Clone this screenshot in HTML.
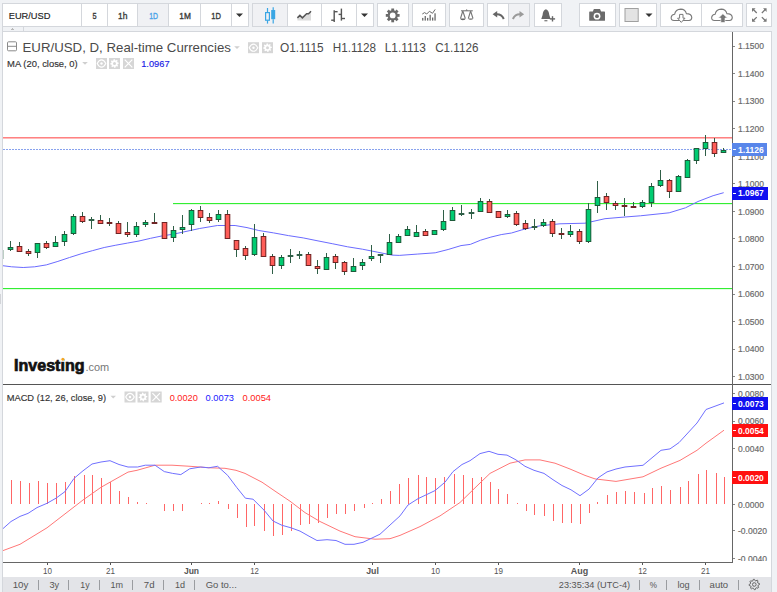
<!DOCTYPE html>
<html><head><meta charset="utf-8">
<style>
html,body{margin:0;padding:0;}
body{width:777px;height:592px;overflow:hidden;background:#f0f2f5;position:relative;font-family:"Liberation Sans",sans-serif;}
.g{position:absolute;top:3px;height:22px;background:#fff;border:1px solid #d4d7dc;}
.b{position:absolute;top:0;height:22px;border-left:1px solid #d4d7dc;text-align:center;font-size:9.4px;font-weight:normal;-webkit-text-stroke:0.35px #3a3a3a;color:#3a3a3a;line-height:23px;}
.b.first{border-left:none}
.act{background:#f0f1f4}
.ab{position:absolute;}
#frame{position:absolute;left:2px;top:31px;width:768px;height:561px;border:1px solid #d4d7dc;border-bottom:none;background:#fff;}
.lg{position:absolute;white-space:nowrap;}
#bbar{position:absolute;left:3px;top:577px;width:768px;height:15px;background:#e3e4e8;}
#bbar span{position:absolute;top:0;line-height:15px;font-size:10px;color:#555;}
.sep{position:absolute;top:3px;width:1px;height:11px;background:#a9abb0;}
svg{position:absolute;left:0;top:0;}
</style></head><body>
<!-- toolbar group A -->
<div class="g" style="left:2px;width:245px;">
  <div class="b first" style="left:0;width:78px;text-align:left;font-weight:normal;color:#1a1a1a;font-size:9.6px;letter-spacing:-0.1px;-webkit-text-stroke:0.25px #1a1a1a;"></div>
  <div class="b" style="left:78px;width:25px;"></div>
  <div class="b" style="left:104px;width:29px;"></div>
  <div class="b act" style="left:134px;width:30px;color:#4aa3e8;-webkit-text-stroke:0.35px #4aa3e8;"></div>
  <div class="b" style="left:165px;width:31px;"></div>
  <div class="b" style="left:197px;width:30px;"></div>
  <div class="b" style="left:228px;width:17px;"></div>
</div>
<div class="g" style="left:252px;width:120px;">
  <div class="b first act" style="left:0;width:34px;"></div>
  <div class="b" style="left:34px;width:33px;"></div>
  <div class="b" style="left:68px;width:34px;"></div>
  <div class="b" style="left:103px;width:17px;"></div>
</div>
<div class="g" style="left:377px;width:30px;"></div>
<div class="g" style="left:412px;width:32px;"></div>
<div class="g" style="left:449px;width:33px;"></div>
<div class="g" style="left:487px;width:41px;">
  <div class="b first" style="left:0;width:20px;"></div>
  <div class="b act" style="left:20px;width:20px;"></div>
</div>
<div class="g" style="left:534px;width:26px;"></div>
<div class="g" style="left:579px;width:35px;"></div>
<div class="g" style="left:619px;width:36px;"></div>
<div class="g" style="left:660px;width:81px;">
  <div class="b first" style="left:0;width:40px;"></div>
  <div class="b" style="left:40px;width:40px;"></div>
</div>
<div class="g" style="left:746px;width:24px;"></div>

<div id="frame"></div>
<div id="bbar"></div>

<svg width="777" height="592" viewBox="0 0 777 592">
<g shape-rendering="crispEdges">
  <rect x="3" y="27" width="768" height="4" fill="#f0f2f5"/>
  <rect x="23" y="27" width="1" height="4" fill="#d4d7dc"/><rect x="2" y="26" width="1" height="6" fill="#d4d7dc"/><rect x="0" y="294" width="1" height="10" fill="#d2d4d8"/><path d="M9.8 30.2 L15.2 30.2 L12.5 28.2 Z" fill="#b8b8b8"/>
  <rect x="3" y="384" width="768" height="1" fill="#555"/>
  <rect x="732" y="32" width="1" height="531" fill="#666"/>
  <rect x="3" y="562" width="730" height="1" fill="#666"/>
</g>
<defs><clipPath id="cp1"><rect x="3" y="32" width="729" height="352"/></clipPath><clipPath id="cp2"><rect x="3" y="385" width="729" height="177"/></clipPath><clipPath id="cp3"><rect x="733" y="385" width="38" height="176"/></clipPath></defs><g clip-path="url(#cp1)"><g shape-rendering="crispEdges">
<rect x="3" y="137" width="729" height="1" fill="#ff8282"/><rect x="3" y="138" width="729" height="1" fill="#ff8282" opacity="0.55"/>
<line x1="3" y1="149.5" x2="732" y2="149.5" stroke="#88a2ee" stroke-width="1" stroke-dasharray="2,1"/>
<rect x="173" y="203" width="559" height="1" fill="#33ee33"/><rect x="173" y="204" width="559" height="1" fill="#33ee33" opacity="0.15"/>
<rect x="3" y="288" width="729" height="1" fill="#33ee33"/><rect x="3" y="289" width="729" height="1" fill="#33ee33" opacity="0.15"/>
</g>
<polyline fill="none" stroke="#6b6bff" stroke-width="1" points="2,265.6 11.6,266.8 23.2,267.5 34.7,266.8 46.3,264.9 57.9,261.4 69.5,257.5 81.1,253.8 92.7,250.6 104.2,247.5 115.8,245.2 127.4,243.1 139,241 150.6,238.3 162.1,235.9 173.7,234.1 199.6,228.5 217.4,225.5 235.1,225.5 247,227.6 258.8,230.5 273.6,232.9 288.4,235.6 303.2,237.9 318,240.9 332.8,243.8 347.6,246.8 362.4,249.2 377.2,252.1 392,255.1 399.2,255.4 417.2,254.1 435.2,252.8 448.1,249.5 461,245.6 470.3,244.4 480.6,240.2 490.9,237.1 501.2,234.6 511.5,233 521.8,229.9 532.1,227.4 540,225.8 560,223.8 585,223.2 605,218.7 620,217.4 640.4,215.8 669.2,212.8 685.5,207.8 698,201.5 713.1,195.7 723.7,192.7"/>
<g shape-rendering="crispEdges">
<rect x="-2.3" y="250" width="5.6" height="9" fill="#1e5a3a" shape-rendering="geometricPrecision"/>
<rect x="-1.3" y="251" width="3.6" height="7" fill="#00cc71" shape-rendering="geometricPrecision"/>
<rect x="10" y="241" width="1" height="6" fill="#2f5f47"/>
<rect x="10" y="250" width="1" height="1" fill="#2f5f47"/>
<rect x="7.7" y="247" width="5.6" height="3" fill="#1e5a3a" shape-rendering="geometricPrecision"/>
<rect x="8.7" y="248" width="3.6" height="1" fill="#00cc71" shape-rendering="geometricPrecision"/>
<rect x="19" y="242" width="1" height="4" fill="#2f5f47"/>
<rect x="16.7" y="246" width="5.6" height="6" fill="#6e2424" shape-rendering="geometricPrecision"/>
<rect x="17.7" y="247" width="3.6" height="4" fill="#ff5d58" shape-rendering="geometricPrecision"/>
<rect x="28" y="249" width="1" height="2" fill="#2f5f47"/>
<rect x="28" y="254" width="1" height="2" fill="#2f5f47"/>
<rect x="25.7" y="251" width="5.6" height="3" fill="#6e2424" shape-rendering="geometricPrecision"/>
<rect x="26.7" y="252" width="3.6" height="1" fill="#ff5d58" shape-rendering="geometricPrecision"/>
<rect x="37" y="253" width="1" height="5" fill="#2f5f47"/>
<rect x="34.7" y="243" width="5.6" height="10" fill="#1e5a3a" shape-rendering="geometricPrecision"/>
<rect x="35.7" y="244" width="3.6" height="8" fill="#00cc71" shape-rendering="geometricPrecision"/>
<rect x="46" y="241" width="1" height="2" fill="#2f5f47"/>
<rect x="46" y="248" width="1" height="1" fill="#2f5f47"/>
<rect x="43.7" y="243" width="5.6" height="5" fill="#6e2424" shape-rendering="geometricPrecision"/>
<rect x="44.7" y="244" width="3.6" height="3" fill="#ff5d58" shape-rendering="geometricPrecision"/>
<rect x="55" y="236" width="1" height="6" fill="#2f5f47"/>
<rect x="52.7" y="242" width="5.6" height="5" fill="#1e5a3a" shape-rendering="geometricPrecision"/>
<rect x="53.7" y="243" width="3.6" height="3" fill="#00cc71" shape-rendering="geometricPrecision"/>
<rect x="64" y="231" width="1" height="3" fill="#2f5f47"/>
<rect x="64" y="242" width="1" height="4" fill="#2f5f47"/>
<rect x="61.7" y="234" width="5.6" height="8" fill="#1e5a3a" shape-rendering="geometricPrecision"/>
<rect x="62.7" y="235" width="3.6" height="6" fill="#00cc71" shape-rendering="geometricPrecision"/>
<rect x="73" y="214" width="1" height="2" fill="#2f5f47"/>
<rect x="73" y="234" width="1" height="1" fill="#2f5f47"/>
<rect x="70.7" y="216" width="5.6" height="18" fill="#1e5a3a" shape-rendering="geometricPrecision"/>
<rect x="71.7" y="217" width="3.6" height="16" fill="#00cc71" shape-rendering="geometricPrecision"/>
<rect x="82" y="212" width="1" height="4" fill="#2f5f47"/>
<rect x="82" y="222" width="1" height="1" fill="#2f5f47"/>
<rect x="79.7" y="216" width="5.6" height="6" fill="#6e2424" shape-rendering="geometricPrecision"/>
<rect x="80.7" y="217" width="3.6" height="4" fill="#ff5d58" shape-rendering="geometricPrecision"/>
<rect x="91" y="217" width="1" height="2" fill="#2f5f47"/>
<rect x="91" y="221" width="1" height="8" fill="#2f5f47"/>
<rect x="88.7" y="219" width="5.6" height="2" fill="#2f5f47" shape-rendering="geometricPrecision"/>
<rect x="100" y="215" width="1" height="5" fill="#2f5f47"/>
<rect x="97.7" y="220" width="5.6" height="4" fill="#6e2424" shape-rendering="geometricPrecision"/>
<rect x="98.7" y="221" width="3.6" height="2" fill="#ff5d58" shape-rendering="geometricPrecision"/>
<rect x="109" y="218" width="1" height="4" fill="#2f5f47"/>
<rect x="109" y="224" width="1" height="2" fill="#2f5f47"/>
<rect x="106.7" y="222" width="5.6" height="2" fill="#6e2424" shape-rendering="geometricPrecision"/>
<rect x="118" y="221" width="1" height="2" fill="#2f5f47"/>
<rect x="115.7" y="223" width="5.6" height="11" fill="#6e2424" shape-rendering="geometricPrecision"/>
<rect x="116.7" y="224" width="3.6" height="9" fill="#ff5d58" shape-rendering="geometricPrecision"/>
<rect x="127" y="222" width="1" height="10" fill="#2f5f47"/>
<rect x="127" y="235" width="1" height="2" fill="#2f5f47"/>
<rect x="124.7" y="232" width="5.6" height="3" fill="#6e2424" shape-rendering="geometricPrecision"/>
<rect x="125.7" y="233" width="3.6" height="1" fill="#ff5d58" shape-rendering="geometricPrecision"/>
<rect x="136" y="222" width="1" height="4" fill="#2f5f47"/>
<rect x="136" y="235" width="1" height="2" fill="#2f5f47"/>
<rect x="133.7" y="226" width="5.6" height="9" fill="#1e5a3a" shape-rendering="geometricPrecision"/>
<rect x="134.7" y="227" width="3.6" height="7" fill="#00cc71" shape-rendering="geometricPrecision"/>
<rect x="145" y="220" width="1" height="2" fill="#2f5f47"/>
<rect x="145" y="225" width="1" height="2" fill="#2f5f47"/>
<rect x="142.7" y="222" width="5.6" height="3" fill="#1e5a3a" shape-rendering="geometricPrecision"/>
<rect x="143.7" y="223" width="3.6" height="1" fill="#00cc71" shape-rendering="geometricPrecision"/>
<rect x="154" y="213" width="1" height="9" fill="#2f5f47"/>
<rect x="151.7" y="222" width="5.6" height="2" fill="#6e2424" shape-rendering="geometricPrecision"/>
<rect x="161.7" y="222" width="5.6" height="17" fill="#6e2424" shape-rendering="geometricPrecision"/>
<rect x="162.7" y="223" width="3.6" height="15" fill="#ff5d58" shape-rendering="geometricPrecision"/>
<rect x="173" y="226" width="1" height="4" fill="#2f5f47"/>
<rect x="173" y="238" width="1" height="4" fill="#2f5f47"/>
<rect x="170.7" y="230" width="5.6" height="8" fill="#1e5a3a" shape-rendering="geometricPrecision"/>
<rect x="171.7" y="231" width="3.6" height="6" fill="#00cc71" shape-rendering="geometricPrecision"/>
<rect x="182" y="215" width="1" height="12" fill="#2f5f47"/>
<rect x="182" y="230" width="1" height="4" fill="#2f5f47"/>
<rect x="179.7" y="227" width="5.6" height="3" fill="#1e5a3a" shape-rendering="geometricPrecision"/>
<rect x="180.7" y="228" width="3.6" height="1" fill="#00cc71" shape-rendering="geometricPrecision"/>
<rect x="191" y="209" width="1" height="1" fill="#2f5f47"/>
<rect x="191" y="225" width="1" height="6" fill="#2f5f47"/>
<rect x="188.7" y="210" width="5.6" height="15" fill="#1e5a3a" shape-rendering="geometricPrecision"/>
<rect x="189.7" y="211" width="3.6" height="13" fill="#00cc71" shape-rendering="geometricPrecision"/>
<rect x="200" y="206" width="1" height="4" fill="#2f5f47"/>
<rect x="200" y="218" width="1" height="4" fill="#2f5f47"/>
<rect x="197.7" y="210" width="5.6" height="8" fill="#6e2424" shape-rendering="geometricPrecision"/>
<rect x="198.7" y="211" width="3.6" height="6" fill="#ff5d58" shape-rendering="geometricPrecision"/>
<rect x="209" y="213" width="1" height="4" fill="#2f5f47"/>
<rect x="209" y="221" width="1" height="2" fill="#2f5f47"/>
<rect x="206.7" y="217" width="5.6" height="4" fill="#6e2424" shape-rendering="geometricPrecision"/>
<rect x="207.7" y="218" width="3.6" height="2" fill="#ff5d58" shape-rendering="geometricPrecision"/>
<rect x="218" y="210" width="1" height="4" fill="#2f5f47"/>
<rect x="218" y="220" width="1" height="2" fill="#2f5f47"/>
<rect x="215.7" y="214" width="5.6" height="6" fill="#1e5a3a" shape-rendering="geometricPrecision"/>
<rect x="216.7" y="215" width="3.6" height="4" fill="#00cc71" shape-rendering="geometricPrecision"/>
<rect x="227" y="210" width="1" height="4" fill="#2f5f47"/>
<rect x="224.7" y="214" width="5.6" height="25" fill="#6e2424" shape-rendering="geometricPrecision"/>
<rect x="225.7" y="215" width="3.6" height="23" fill="#ff5d58" shape-rendering="geometricPrecision"/>
<rect x="236" y="250" width="1" height="7" fill="#2f5f47"/>
<rect x="233.7" y="240" width="5.6" height="10" fill="#6e2424" shape-rendering="geometricPrecision"/>
<rect x="234.7" y="241" width="3.6" height="8" fill="#ff5d58" shape-rendering="geometricPrecision"/>
<rect x="245" y="246" width="1" height="2" fill="#2f5f47"/>
<rect x="245" y="256" width="1" height="4" fill="#2f5f47"/>
<rect x="242.7" y="248" width="5.6" height="8" fill="#6e2424" shape-rendering="geometricPrecision"/>
<rect x="243.7" y="249" width="3.6" height="6" fill="#ff5d58" shape-rendering="geometricPrecision"/>
<rect x="254" y="224" width="1" height="13" fill="#2f5f47"/>
<rect x="254" y="255" width="1" height="1" fill="#2f5f47"/>
<rect x="251.7" y="237" width="5.6" height="18" fill="#1e5a3a" shape-rendering="geometricPrecision"/>
<rect x="252.7" y="238" width="3.6" height="16" fill="#00cc71" shape-rendering="geometricPrecision"/>
<rect x="263" y="233" width="1" height="3" fill="#2f5f47"/>
<rect x="260.7" y="236" width="5.6" height="21" fill="#6e2424" shape-rendering="geometricPrecision"/>
<rect x="261.7" y="237" width="3.6" height="19" fill="#ff5d58" shape-rendering="geometricPrecision"/>
<rect x="272" y="254" width="1" height="2" fill="#2f5f47"/>
<rect x="272" y="266" width="1" height="8" fill="#2f5f47"/>
<rect x="269.7" y="256" width="5.6" height="10" fill="#6e2424" shape-rendering="geometricPrecision"/>
<rect x="270.7" y="257" width="3.6" height="8" fill="#ff5d58" shape-rendering="geometricPrecision"/>
<rect x="281" y="255" width="1" height="2" fill="#2f5f47"/>
<rect x="281" y="266" width="1" height="3" fill="#2f5f47"/>
<rect x="278.7" y="257" width="5.6" height="9" fill="#1e5a3a" shape-rendering="geometricPrecision"/>
<rect x="279.7" y="258" width="3.6" height="7" fill="#00cc71" shape-rendering="geometricPrecision"/>
<rect x="290" y="249" width="1" height="6" fill="#2f5f47"/>
<rect x="290" y="257" width="1" height="6" fill="#2f5f47"/>
<rect x="287.7" y="255" width="5.6" height="2" fill="#2f5f47" shape-rendering="geometricPrecision"/>
<rect x="299" y="251" width="1" height="3" fill="#2f5f47"/>
<rect x="299" y="256" width="1" height="3" fill="#2f5f47"/>
<rect x="296.7" y="254" width="5.6" height="2" fill="#2f5f47" shape-rendering="geometricPrecision"/>
<rect x="308" y="252" width="1" height="2" fill="#2f5f47"/>
<rect x="305.7" y="254" width="5.6" height="12" fill="#6e2424" shape-rendering="geometricPrecision"/>
<rect x="306.7" y="255" width="3.6" height="10" fill="#ff5d58" shape-rendering="geometricPrecision"/>
<rect x="317" y="260" width="1" height="6" fill="#2f5f47"/>
<rect x="317" y="269" width="1" height="5" fill="#2f5f47"/>
<rect x="314.7" y="266" width="5.6" height="3" fill="#6e2424" shape-rendering="geometricPrecision"/>
<rect x="315.7" y="267" width="3.6" height="1" fill="#ff5d58" shape-rendering="geometricPrecision"/>
<rect x="326" y="253" width="1" height="4" fill="#2f5f47"/>
<rect x="323.7" y="257" width="5.6" height="13" fill="#1e5a3a" shape-rendering="geometricPrecision"/>
<rect x="324.7" y="258" width="3.6" height="11" fill="#00cc71" shape-rendering="geometricPrecision"/>
<rect x="335" y="254" width="1" height="2" fill="#2f5f47"/>
<rect x="335" y="263" width="1" height="6" fill="#2f5f47"/>
<rect x="332.7" y="256" width="5.6" height="7" fill="#6e2424" shape-rendering="geometricPrecision"/>
<rect x="333.7" y="257" width="3.6" height="5" fill="#ff5d58" shape-rendering="geometricPrecision"/>
<rect x="344" y="261" width="1" height="1" fill="#2f5f47"/>
<rect x="344" y="272" width="1" height="3" fill="#2f5f47"/>
<rect x="341.7" y="262" width="5.6" height="10" fill="#6e2424" shape-rendering="geometricPrecision"/>
<rect x="342.7" y="263" width="3.6" height="8" fill="#ff5d58" shape-rendering="geometricPrecision"/>
<rect x="353" y="258" width="1" height="8" fill="#2f5f47"/>
<rect x="350.7" y="266" width="5.6" height="6" fill="#1e5a3a" shape-rendering="geometricPrecision"/>
<rect x="351.7" y="267" width="3.6" height="4" fill="#00cc71" shape-rendering="geometricPrecision"/>
<rect x="362" y="259" width="1" height="3" fill="#2f5f47"/>
<rect x="362" y="266" width="1" height="4" fill="#2f5f47"/>
<rect x="359.7" y="262" width="5.6" height="4" fill="#1e5a3a" shape-rendering="geometricPrecision"/>
<rect x="360.7" y="263" width="3.6" height="2" fill="#00cc71" shape-rendering="geometricPrecision"/>
<rect x="371" y="245" width="1" height="11" fill="#2f5f47"/>
<rect x="371" y="259" width="1" height="2" fill="#2f5f47"/>
<rect x="368.7" y="256" width="5.6" height="3" fill="#1e5a3a" shape-rendering="geometricPrecision"/>
<rect x="369.7" y="257" width="3.6" height="1" fill="#00cc71" shape-rendering="geometricPrecision"/>
<rect x="380" y="255" width="1" height="8" fill="#2f5f47"/>
<rect x="377.7" y="254" width="5.6" height="2" fill="#2f5f47" shape-rendering="geometricPrecision"/>
<rect x="389" y="234" width="1" height="8" fill="#2f5f47"/>
<rect x="386.7" y="242" width="5.6" height="13" fill="#1e5a3a" shape-rendering="geometricPrecision"/>
<rect x="387.7" y="243" width="3.6" height="11" fill="#00cc71" shape-rendering="geometricPrecision"/>
<rect x="398" y="234" width="1" height="2" fill="#2f5f47"/>
<rect x="395.7" y="236" width="5.6" height="7" fill="#1e5a3a" shape-rendering="geometricPrecision"/>
<rect x="396.7" y="237" width="3.6" height="5" fill="#00cc71" shape-rendering="geometricPrecision"/>
<rect x="407" y="226" width="1" height="3" fill="#2f5f47"/>
<rect x="404.7" y="229" width="5.6" height="7" fill="#1e5a3a" shape-rendering="geometricPrecision"/>
<rect x="405.7" y="230" width="3.6" height="5" fill="#00cc71" shape-rendering="geometricPrecision"/>
<rect x="416" y="225" width="1" height="7" fill="#2f5f47"/>
<rect x="413.7" y="232" width="5.6" height="5" fill="#1e5a3a" shape-rendering="geometricPrecision"/>
<rect x="414.7" y="233" width="3.6" height="3" fill="#00cc71" shape-rendering="geometricPrecision"/>
<rect x="425" y="229" width="1" height="2" fill="#2f5f47"/>
<rect x="422.7" y="231" width="5.6" height="5" fill="#6e2424" shape-rendering="geometricPrecision"/>
<rect x="423.7" y="232" width="3.6" height="3" fill="#ff5d58" shape-rendering="geometricPrecision"/>
<rect x="431.7" y="230" width="5.6" height="5" fill="#1e5a3a" shape-rendering="geometricPrecision"/>
<rect x="432.7" y="231" width="3.6" height="3" fill="#00cc71" shape-rendering="geometricPrecision"/>
<rect x="443" y="210" width="1" height="11" fill="#2f5f47"/>
<rect x="443" y="230" width="1" height="1" fill="#2f5f47"/>
<rect x="440.7" y="221" width="5.6" height="9" fill="#1e5a3a" shape-rendering="geometricPrecision"/>
<rect x="441.7" y="222" width="3.6" height="7" fill="#00cc71" shape-rendering="geometricPrecision"/>
<rect x="452" y="207" width="1" height="3" fill="#2f5f47"/>
<rect x="449.7" y="210" width="5.6" height="11" fill="#1e5a3a" shape-rendering="geometricPrecision"/>
<rect x="450.7" y="211" width="3.6" height="9" fill="#00cc71" shape-rendering="geometricPrecision"/>
<rect x="461" y="205" width="1" height="8" fill="#2f5f47"/>
<rect x="461" y="215" width="1" height="1" fill="#2f5f47"/>
<rect x="458.7" y="213" width="5.6" height="2" fill="#2f5f47" shape-rendering="geometricPrecision"/>
<rect x="471" y="209" width="1" height="3" fill="#2f5f47"/>
<rect x="471" y="213" width="1" height="6" fill="#2f5f47"/>
<rect x="468.7" y="212" width="5.6" height="2" fill="#2f5f47" shape-rendering="geometricPrecision"/>
<rect x="480" y="198" width="1" height="3" fill="#2f5f47"/>
<rect x="477.7" y="201" width="5.6" height="11" fill="#1e5a3a" shape-rendering="geometricPrecision"/>
<rect x="478.7" y="202" width="3.6" height="9" fill="#00cc71" shape-rendering="geometricPrecision"/>
<rect x="489" y="199" width="1" height="2" fill="#2f5f47"/>
<rect x="486.7" y="201" width="5.6" height="12" fill="#6e2424" shape-rendering="geometricPrecision"/>
<rect x="487.7" y="202" width="3.6" height="10" fill="#ff5d58" shape-rendering="geometricPrecision"/>
<rect x="495.7" y="211" width="5.6" height="7" fill="#6e2424" shape-rendering="geometricPrecision"/>
<rect x="496.7" y="212" width="3.6" height="5" fill="#ff5d58" shape-rendering="geometricPrecision"/>
<rect x="507" y="210" width="1" height="4" fill="#2f5f47"/>
<rect x="507" y="217" width="1" height="1" fill="#2f5f47"/>
<rect x="504.7" y="214" width="5.6" height="3" fill="#1e5a3a" shape-rendering="geometricPrecision"/>
<rect x="505.7" y="215" width="3.6" height="1" fill="#00cc71" shape-rendering="geometricPrecision"/>
<rect x="516" y="211" width="1" height="2" fill="#2f5f47"/>
<rect x="516" y="225" width="1" height="1" fill="#2f5f47"/>
<rect x="513.7" y="213" width="5.6" height="12" fill="#6e2424" shape-rendering="geometricPrecision"/>
<rect x="514.7" y="214" width="3.6" height="10" fill="#ff5d58" shape-rendering="geometricPrecision"/>
<rect x="525" y="220" width="1" height="3" fill="#2f5f47"/>
<rect x="525" y="229" width="1" height="1" fill="#2f5f47"/>
<rect x="522.7" y="223" width="5.6" height="6" fill="#6e2424" shape-rendering="geometricPrecision"/>
<rect x="523.7" y="224" width="3.6" height="4" fill="#ff5d58" shape-rendering="geometricPrecision"/>
<rect x="534" y="219" width="1" height="7" fill="#2f5f47"/>
<rect x="534" y="228" width="1" height="2" fill="#2f5f47"/>
<rect x="531.7" y="226" width="5.6" height="2" fill="#2f5f47" shape-rendering="geometricPrecision"/>
<rect x="543" y="219" width="1" height="3" fill="#2f5f47"/>
<rect x="543" y="226" width="1" height="1" fill="#2f5f47"/>
<rect x="540.7" y="222" width="5.6" height="4" fill="#1e5a3a" shape-rendering="geometricPrecision"/>
<rect x="541.7" y="223" width="3.6" height="2" fill="#00cc71" shape-rendering="geometricPrecision"/>
<rect x="552" y="219" width="1" height="2" fill="#2f5f47"/>
<rect x="552" y="234" width="1" height="3" fill="#2f5f47"/>
<rect x="549.7" y="221" width="5.6" height="13" fill="#6e2424" shape-rendering="geometricPrecision"/>
<rect x="550.7" y="222" width="3.6" height="11" fill="#ff5d58" shape-rendering="geometricPrecision"/>
<rect x="561" y="228" width="1" height="5" fill="#2f5f47"/>
<rect x="561" y="235" width="1" height="4" fill="#2f5f47"/>
<rect x="558.7" y="233" width="5.6" height="2" fill="#6e2424" shape-rendering="geometricPrecision"/>
<rect x="570" y="225" width="1" height="6" fill="#2f5f47"/>
<rect x="570" y="235" width="1" height="2" fill="#2f5f47"/>
<rect x="567.7" y="231" width="5.6" height="4" fill="#1e5a3a" shape-rendering="geometricPrecision"/>
<rect x="568.7" y="232" width="3.6" height="2" fill="#00cc71" shape-rendering="geometricPrecision"/>
<rect x="579" y="229" width="1" height="2" fill="#2f5f47"/>
<rect x="579" y="242" width="1" height="2" fill="#2f5f47"/>
<rect x="576.7" y="231" width="5.6" height="11" fill="#6e2424" shape-rendering="geometricPrecision"/>
<rect x="577.7" y="232" width="3.6" height="9" fill="#ff5d58" shape-rendering="geometricPrecision"/>
<rect x="588" y="203" width="1" height="6" fill="#2f5f47"/>
<rect x="588" y="242" width="1" height="1" fill="#2f5f47"/>
<rect x="585.7" y="209" width="5.6" height="33" fill="#1e5a3a" shape-rendering="geometricPrecision"/>
<rect x="586.7" y="210" width="3.6" height="31" fill="#00cc71" shape-rendering="geometricPrecision"/>
<rect x="597" y="181" width="1" height="16" fill="#2f5f47"/>
<rect x="597" y="206" width="1" height="7" fill="#2f5f47"/>
<rect x="594.7" y="197" width="5.6" height="9" fill="#1e5a3a" shape-rendering="geometricPrecision"/>
<rect x="595.7" y="198" width="3.6" height="7" fill="#00cc71" shape-rendering="geometricPrecision"/>
<rect x="606" y="193" width="1" height="3" fill="#2f5f47"/>
<rect x="606" y="203" width="1" height="7" fill="#2f5f47"/>
<rect x="603.7" y="196" width="5.6" height="7" fill="#6e2424" shape-rendering="geometricPrecision"/>
<rect x="604.7" y="197" width="3.6" height="5" fill="#ff5d58" shape-rendering="geometricPrecision"/>
<rect x="615" y="201" width="1" height="2" fill="#2f5f47"/>
<rect x="615" y="206" width="1" height="4" fill="#2f5f47"/>
<rect x="612.7" y="203" width="5.6" height="3" fill="#6e2424" shape-rendering="geometricPrecision"/>
<rect x="613.7" y="204" width="3.6" height="1" fill="#ff5d58" shape-rendering="geometricPrecision"/>
<rect x="624" y="198" width="1" height="7" fill="#2f5f47"/>
<rect x="624" y="207" width="1" height="9" fill="#2f5f47"/>
<rect x="621.7" y="205" width="5.6" height="2" fill="#6e2424" shape-rendering="geometricPrecision"/>
<rect x="633" y="202" width="1" height="4" fill="#2f5f47"/>
<rect x="633" y="207" width="1" height="1" fill="#2f5f47"/>
<rect x="630.7" y="206" width="5.6" height="2" fill="#6e2424" shape-rendering="geometricPrecision"/>
<rect x="642" y="200" width="1" height="2" fill="#2f5f47"/>
<rect x="642" y="207" width="1" height="1" fill="#2f5f47"/>
<rect x="639.7" y="202" width="5.6" height="5" fill="#1e5a3a" shape-rendering="geometricPrecision"/>
<rect x="640.7" y="203" width="3.6" height="3" fill="#00cc71" shape-rendering="geometricPrecision"/>
<rect x="651" y="183" width="1" height="3" fill="#2f5f47"/>
<rect x="651" y="203" width="1" height="4" fill="#2f5f47"/>
<rect x="648.7" y="186" width="5.6" height="17" fill="#1e5a3a" shape-rendering="geometricPrecision"/>
<rect x="649.7" y="187" width="3.6" height="15" fill="#00cc71" shape-rendering="geometricPrecision"/>
<rect x="660" y="170" width="1" height="10" fill="#2f5f47"/>
<rect x="660" y="186" width="1" height="1" fill="#2f5f47"/>
<rect x="657.7" y="180" width="5.6" height="6" fill="#1e5a3a" shape-rendering="geometricPrecision"/>
<rect x="658.7" y="181" width="3.6" height="4" fill="#00cc71" shape-rendering="geometricPrecision"/>
<rect x="669" y="179" width="1" height="1" fill="#2f5f47"/>
<rect x="669" y="192" width="1" height="6" fill="#2f5f47"/>
<rect x="666.7" y="180" width="5.6" height="12" fill="#6e2424" shape-rendering="geometricPrecision"/>
<rect x="667.7" y="181" width="3.6" height="10" fill="#ff5d58" shape-rendering="geometricPrecision"/>
<rect x="678" y="175" width="1" height="1" fill="#2f5f47"/>
<rect x="675.7" y="176" width="5.6" height="16" fill="#1e5a3a" shape-rendering="geometricPrecision"/>
<rect x="676.7" y="177" width="3.6" height="14" fill="#00cc71" shape-rendering="geometricPrecision"/>
<rect x="687" y="159" width="1" height="1" fill="#2f5f47"/>
<rect x="684.7" y="160" width="5.6" height="18" fill="#1e5a3a" shape-rendering="geometricPrecision"/>
<rect x="685.7" y="161" width="3.6" height="16" fill="#00cc71" shape-rendering="geometricPrecision"/>
<rect x="696" y="161" width="1" height="3" fill="#2f5f47"/>
<rect x="693.7" y="148" width="5.6" height="13" fill="#1e5a3a" shape-rendering="geometricPrecision"/>
<rect x="694.7" y="149" width="3.6" height="11" fill="#00cc71" shape-rendering="geometricPrecision"/>
<rect x="705" y="135" width="1" height="7" fill="#2f5f47"/>
<rect x="705" y="149" width="1" height="7" fill="#2f5f47"/>
<rect x="702.7" y="142" width="5.6" height="7" fill="#1e5a3a" shape-rendering="geometricPrecision"/>
<rect x="703.7" y="143" width="3.6" height="5" fill="#00cc71" shape-rendering="geometricPrecision"/>
<rect x="714" y="138" width="1" height="4" fill="#2f5f47"/>
<rect x="714" y="154" width="1" height="3" fill="#2f5f47"/>
<rect x="711.7" y="142" width="5.6" height="12" fill="#6e2424" shape-rendering="geometricPrecision"/>
<rect x="712.7" y="143" width="3.6" height="10" fill="#ff5d58" shape-rendering="geometricPrecision"/>
<rect x="723" y="148" width="1" height="2" fill="#2f5f47"/>
<rect x="720.7" y="150" width="5.6" height="3" fill="#1e5a3a" shape-rendering="geometricPrecision"/>
<rect x="721.7" y="151" width="3.6" height="1" fill="#00cc71" shape-rendering="geometricPrecision"/>
</g></g><g clip-path="url(#cp2)"><g shape-rendering="crispEdges" fill="#ff6666">
<rect x="11" y="480" width="1" height="24"/>
<rect x="20" y="481" width="1" height="23"/>
<rect x="29" y="483" width="1" height="21"/>
<rect x="38" y="481" width="1" height="23"/>
<rect x="47" y="483" width="1" height="21"/>
<rect x="56" y="483" width="1" height="21"/>
<rect x="65" y="482" width="1" height="22"/>
<rect x="74" y="476" width="1" height="28"/>
<rect x="84" y="475" width="1" height="29"/>
<rect x="92" y="475" width="1" height="29"/>
<rect x="101" y="478" width="1" height="26"/>
<rect x="110" y="482" width="1" height="22"/>
<rect x="119" y="491" width="1" height="13"/>
<rect x="128" y="497" width="1" height="7"/>
<rect x="137" y="502" width="1" height="2"/>
<rect x="146" y="503" width="1" height="1"/>
<rect x="164" y="504" width="1" height="7"/>
<rect x="173" y="504" width="1" height="7"/>
<rect x="182" y="504" width="1" height="7"/>
<rect x="201" y="503" width="1" height="1"/>
<rect x="209" y="503" width="1" height="1"/>
<rect x="218" y="501" width="1" height="3"/>
<rect x="228" y="504" width="1" height="5"/>
<rect x="237" y="504" width="1" height="14"/>
<rect x="246" y="504" width="1" height="23"/>
<rect x="254" y="504" width="1" height="22"/>
<rect x="264" y="504" width="1" height="27"/>
<rect x="273" y="504" width="1" height="32"/>
<rect x="282" y="504" width="1" height="31"/>
<rect x="291" y="504" width="1" height="27"/>
<rect x="300" y="504" width="1" height="21"/>
<rect x="309" y="504" width="1" height="20"/>
<rect x="318" y="504" width="1" height="19"/>
<rect x="327" y="504" width="1" height="14"/>
<rect x="336" y="504" width="1" height="10"/>
<rect x="345" y="504" width="1" height="10"/>
<rect x="354" y="504" width="1" height="7"/>
<rect x="364" y="504" width="1" height="4"/>
<rect x="372" y="503" width="1" height="1"/>
<rect x="381" y="499" width="1" height="5"/>
<rect x="390" y="491" width="1" height="13"/>
<rect x="399" y="484" width="1" height="20"/>
<rect x="408" y="478" width="1" height="26"/>
<rect x="418" y="475" width="1" height="29"/>
<rect x="426" y="477" width="1" height="27"/>
<rect x="435" y="478" width="1" height="26"/>
<rect x="444" y="477" width="1" height="27"/>
<rect x="454" y="474" width="1" height="30"/>
<rect x="463" y="475" width="1" height="29"/>
<rect x="472" y="478" width="1" height="26"/>
<rect x="481" y="477" width="1" height="27"/>
<rect x="490" y="482" width="1" height="22"/>
<rect x="498" y="489" width="1" height="15"/>
<rect x="507" y="494" width="1" height="10"/>
<rect x="517" y="503" width="1" height="1"/>
<rect x="526" y="504" width="1" height="7"/>
<rect x="534" y="504" width="1" height="11"/>
<rect x="544" y="504" width="1" height="12"/>
<rect x="553" y="504" width="1" height="17"/>
<rect x="562" y="504" width="1" height="19"/>
<rect x="571" y="504" width="1" height="19"/>
<rect x="580" y="504" width="1" height="20"/>
<rect x="589" y="504" width="1" height="9"/>
<rect x="597" y="502" width="1" height="2"/>
<rect x="607" y="495" width="1" height="9"/>
<rect x="616" y="492" width="1" height="12"/>
<rect x="625" y="491" width="1" height="13"/>
<rect x="634" y="492" width="1" height="12"/>
<rect x="644" y="493" width="1" height="11"/>
<rect x="652" y="488" width="1" height="16"/>
<rect x="661" y="486" width="1" height="18"/>
<rect x="670" y="490" width="1" height="14"/>
<rect x="680" y="487" width="1" height="17"/>
<rect x="688" y="481" width="1" height="23"/>
<rect x="698" y="474" width="1" height="30"/>
<rect x="706" y="470" width="1" height="34"/>
<rect x="716" y="473" width="1" height="31"/>
<rect x="724" y="477" width="1" height="27"/>
</g>
<polyline fill="none" stroke="#ff7777" stroke-width="1" points="3,550.6 20,544.3 47,527.8 65,513.9 83,500 101,487.3 110,482.2 128,472.1 137,470.3 155,465.2 172,465.2 190,466.3 210,467.8 225,468.3 236,470.3 245,473.4 250,476 262,482.2 275,491.1 290,501.2 305,512.6 320,521.5 340,531.1 355,536.7 375,539.2 390,538.7 400,535.4 420,526.6 440,515.9 460,502.5 480,483 490,473.4 510,463.2 525,459.9 540,459.9 555,463.2 570,469 585,475.4 595,478.9 616,481.4 643,476.8 661,468.2 680,460.4 697,450.3 706,443.2 724,430.2"/>
<polyline fill="none" stroke="#7070ff" stroke-width="1" points="3,528.6 11,521.5 20,516.4 28,513.4 37,507.6 47,503.3 56,498.2 65,491.6 74,478.4 83,470.8 92,464 101,462 110,460.7 119,464.5 128,467 137.7,467 145.3,465.2 155,465.2 164.3,471.6 172.7,473.4 180.8,474.6 189.7,468.8 200.6,467 208.7,467.8 217.6,466.3 227.7,475.4 236.6,487.3 245.4,498.2 253,499.2 264,510.1 273,521 282,525.3 291,527.8 300,531.1 309,536.2 317,540.5 327,539.7 336,540.5 345,544.3 354,544.3 363,542.3 380,534.2 400,515.9 408,505 418,498.7 435,490.6 445,482.2 453,471.6 462,464.5 470,460.7 480,453.6 489,451.3 498,454.3 507,455.1 516,459.9 525,466.3 534,470.3 544,473.4 553,479.7 562,485.5 571,489.8 580,495.7 589,489.1 598,477.9 607,471.9 616,469 625,467 643,465.3 661,450.3 670,448.9 679,442.6 697,423 706,409.5 724,402.9"/></g>
<g shape-rendering="crispEdges" fill="#888">
<rect x="733" y="46" width="2" height="1"/>
<rect x="733" y="73" width="2" height="1"/>
<rect x="733" y="101" width="2" height="1"/>
<rect x="733" y="128" width="2" height="1"/>
<rect x="733" y="156" width="2" height="1"/>
<rect x="733" y="183" width="2" height="1"/>
<rect x="733" y="211" width="2" height="1"/>
<rect x="733" y="238" width="2" height="1"/>
<rect x="733" y="266" width="2" height="1"/>
<rect x="733" y="294" width="2" height="1"/>
<rect x="733" y="321" width="2" height="1"/>
<rect x="733" y="349" width="2" height="1"/>
<rect x="733" y="376" width="2" height="1"/>
<rect x="733" y="393" width="2" height="1"/>
<rect x="733" y="421" width="2" height="1"/>
<rect x="733" y="448" width="2" height="1"/>
<rect x="733" y="476" width="2" height="1"/>
<rect x="733" y="504" width="2" height="1"/>
<rect x="733" y="530" width="2" height="1"/>
<rect x="733" y="558" width="2" height="1"/>
</g>
<g font-family="Liberation Sans" font-size="9.9" fill="#6a6a6a" stroke="#6a6a6a" stroke-width="0.2">
<text x="738" y="49.3" textLength="26" lengthAdjust="spacingAndGlyphs">1.1500</text>
<text x="738" y="76.9" textLength="26" lengthAdjust="spacingAndGlyphs">1.1400</text>
<text x="738" y="104.4" textLength="26" lengthAdjust="spacingAndGlyphs">1.1300</text>
<text x="738" y="132" textLength="26" lengthAdjust="spacingAndGlyphs">1.1200</text>
<text x="738" y="159.5" textLength="26" lengthAdjust="spacingAndGlyphs">1.1100</text>
<text x="738" y="187.1" textLength="26" lengthAdjust="spacingAndGlyphs">1.1000</text>
<text x="738" y="214.6" textLength="26" lengthAdjust="spacingAndGlyphs">1.0900</text>
<text x="738" y="242.2" textLength="26" lengthAdjust="spacingAndGlyphs">1.0800</text>
<text x="738" y="269.7" textLength="26" lengthAdjust="spacingAndGlyphs">1.0700</text>
<text x="738" y="297.3" textLength="26" lengthAdjust="spacingAndGlyphs">1.0600</text>
<text x="738" y="324.8" textLength="26" lengthAdjust="spacingAndGlyphs">1.0500</text>
<text x="738" y="352.4" textLength="26" lengthAdjust="spacingAndGlyphs">1.0400</text>
<text x="738" y="379.9" textLength="26" lengthAdjust="spacingAndGlyphs">1.0300</text>
</g><g clip-path="url(#cp3)" font-family="Liberation Sans" font-size="9.9" fill="#6a6a6a" stroke="#6a6a6a" stroke-width="0.2">
<text x="738" y="396.5" textLength="26" lengthAdjust="spacingAndGlyphs">0.0080</text>
<text x="738" y="424.3" textLength="26" lengthAdjust="spacingAndGlyphs">0.0060</text>
<text x="738" y="451.7" textLength="26" lengthAdjust="spacingAndGlyphs">0.0040</text>
<text x="738" y="479.6" textLength="26" lengthAdjust="spacingAndGlyphs">0.0020</text>
<text x="738" y="507.5" textLength="26" lengthAdjust="spacingAndGlyphs">0.0000</text>
<text x="738" y="534" textLength="29" lengthAdjust="spacingAndGlyphs">-0.0020</text>
<text x="738" y="561.8" textLength="29" lengthAdjust="spacingAndGlyphs">-0.0040</text>
</g>
<text x="8.7" y="18.9" font-family="Liberation Sans" font-size="9.7" fill="#222" stroke="#222" stroke-width="0.15" textLength="41.8" lengthAdjust="spacingAndGlyphs">EUR/USD</text>
<text x="92.5" y="18.6" font-family="Liberation Sans" font-size="9.2" fill="#3a3a3a" stroke="#3a3a3a" stroke-width="0.35" textLength="4.1" lengthAdjust="spacingAndGlyphs">5</text>
<text x="118" y="18.6" font-family="Liberation Sans" font-size="9.2" fill="#3a3a3a" stroke="#3a3a3a" stroke-width="0.35" textLength="9.4" lengthAdjust="spacingAndGlyphs">1h</text>
<text x="149.2" y="18.6" font-family="Liberation Sans" font-size="9.2" fill="#4aa3e8" stroke="#4aa3e8" stroke-width="0.35" textLength="8.8" lengthAdjust="spacingAndGlyphs">1D</text>
<text x="179.3" y="18.6" font-family="Liberation Sans" font-size="9.2" fill="#3a3a3a" stroke="#3a3a3a" stroke-width="0.35" textLength="11.6" lengthAdjust="spacingAndGlyphs">1M</text>
<text x="211.3" y="18.6" font-family="Liberation Sans" font-size="9.2" fill="#3a3a3a" stroke="#3a3a3a" stroke-width="0.35" textLength="9.7" lengthAdjust="spacingAndGlyphs">1D</text>
<path d="M236.0 13.5 L243.0 13.5 L239.5 17 Z" fill="#333"/>
<path d="M361.0 13.5 L368.0 13.5 L364.5 17 Z" fill="#333"/>
<path d="M645.5 13.5 L652.5 13.5 L649 17 Z" fill="#333"/>
<g fill="none" stroke="#3aa6e4" stroke-width="1.2"><rect x="265.6" y="12.6" width="3.8" height="7.6"/><line x1="267.5" y1="8" x2="267.5" y2="12.6"/><line x1="267.5" y1="20.2" x2="267.5" y2="23.6"/><line x1="273.2" y1="7.3" x2="273.2" y2="10"/><line x1="273.2" y1="19.2" x2="273.2" y2="23.6"/></g><rect x="271.2" y="10" width="4" height="9.2" fill="#3aa6e4"/>
<path d="M297.4 17.9 L299.9 15.4 L302.4 17.9 L306.6 13.8 L308.6 13.8 L311 11.3 L311 20.6 L297.4 20.6 Z" fill="#dcdcdc"/>
<polyline points="297.4,17.9 299.9,15.4 302.4,17.9 306.6,13.8 308.6,13.8 311,11.3" fill="none" stroke="#555" stroke-width="1.5"/>
<g stroke="#555" stroke-width="1.4" fill="none"><line x1="334.2" y1="10.2" x2="334.2" y2="22.1"/><line x1="331.2" y1="20.2" x2="334.2" y2="20.2"/><line x1="334.2" y1="11.7" x2="337.6" y2="11.7"/><line x1="341.4" y1="8.6" x2="341.4" y2="20.6"/><line x1="338.6" y1="14.4" x2="341.4" y2="14.4"/><line x1="341.4" y1="18.5" x2="345" y2="18.5"/></g>
<g fill="#6a6a6a"><circle cx="392.7" cy="15.4" r="5.1"/>
<rect x="391.3" y="8.5" width="2.8" height="3" transform="rotate(0 392.7 15.4)"/>
<rect x="391.3" y="8.5" width="2.8" height="3" transform="rotate(45 392.7 15.4)"/>
<rect x="391.3" y="8.5" width="2.8" height="3" transform="rotate(90 392.7 15.4)"/>
<rect x="391.3" y="8.5" width="2.8" height="3" transform="rotate(135 392.7 15.4)"/>
<rect x="391.3" y="8.5" width="2.8" height="3" transform="rotate(180 392.7 15.4)"/>
<rect x="391.3" y="8.5" width="2.8" height="3" transform="rotate(225 392.7 15.4)"/>
<rect x="391.3" y="8.5" width="2.8" height="3" transform="rotate(270 392.7 15.4)"/>
<rect x="391.3" y="8.5" width="2.8" height="3" transform="rotate(315 392.7 15.4)"/>
</g>
<circle cx="392.7" cy="15.4" r="2.9" fill="#fff"/>
<rect x="422.09999999999997" y="17.9" width="1.3" height="2.700000000000003" fill="#6a6a6a"/>
<rect x="424.59999999999997" y="16" width="1.3" height="4.600000000000001" fill="#6a6a6a"/>
<rect x="427.0" y="17.9" width="1.3" height="2.700000000000003" fill="#6a6a6a"/>
<rect x="429.5" y="14.8" width="1.3" height="5.800000000000001" fill="#6a6a6a"/>
<rect x="432.0" y="17.5" width="1.3" height="3.1000000000000014" fill="#6a6a6a"/>
<rect x="434.4" y="13.3" width="1.3" height="7.300000000000001" fill="#6a6a6a"/>
<polyline points="422.3,14 424.6,12.6 426.7,14 429.4,11.3 432.5,13.3 435.2,9.4" fill="none" stroke="#6a6a6a" stroke-width="1"/>
<g stroke="#777" stroke-width="1.1" fill="none"><line x1="461" y1="10.8" x2="472.8" y2="10.8"/><path d="M462.8 11 L460.5 18.5 M462.8 11 L465.3 18.5 M470.6 11 L468.3 18.5 M470.6 11 L473 18.5"/></g><path d="M460.2 18.6 A2.7 1.6 0 0 0 465.6 18.6 Z M468.1 18.6 A2.7 1.6 0 0 0 473.3 18.6 Z" fill="#666"/><path d="M465.5 10.8 L466.7 9 L467.9 10.8 Z" fill="#777"/>
<path d="M492.6 14.3 L497.2 10.9 L497.2 17.6 Z" fill="#666"/><path d="M496 14.3 Q501.5 13.8 503.8 19" fill="none" stroke="#666" stroke-width="2"/>
<path d="M524.1 14.3 L519.5 10.9 L519.5 17.6 Z" fill="#9a9a9a"/><path d="M520.7 14.3 Q515.2 13.8 512.9 19" fill="none" stroke="#9a9a9a" stroke-width="2"/>
<path d="M545.9 9.3 Q542.8 10.5 542.6 15 L541.3 18.9 L550.6 18.9 L549.3 15 Q549 10.5 545.9 9.3 Z" fill="#666"/><rect x="544.4" y="20.2" width="3" height="1.1" fill="#666"/><rect x="549.8" y="18.2" width="5.3" height="1.4" fill="#666"/><rect x="551.8" y="16.2" width="1.4" height="5.3" fill="#666"/>
<path d="M589.2 12.2 Q589.2 11.6 589.8 11.6 L592.8 11.6 L593.9 9.1 L600 9.1 L601.1 11.6 L604.4 11.6 Q605 11.6 605 12.2 L605 20.2 Q605 20.7 604.4 20.7 L589.8 20.7 Q589.2 20.7 589.2 20.2 Z" fill="#6b6b6b"/><circle cx="597" cy="16.2" r="3.4" fill="#fff"/><circle cx="597" cy="16.2" r="1.9" fill="#6b6b6b"/>
<rect x="625" y="8.5" width="13.2" height="13" fill="#e3e3e3" stroke="#a0a0a0" stroke-width="1"/>
<path d="M674 20.5 Q670.8 20.3 671.2 17.2 Q671.7 14.5 674.6 14.3 Q675.5 9.2 680.8 9.1 Q685.2 9.2 686.4 13.6 Q691.2 13.6 691.8 17.3 Q691.8 20.3 689 20.5 Z" fill="none" stroke="#7a7a7a" stroke-width="1.1"/>
<path d="M679.6 14.4 L683 14.4 L683 18.2 L685 18.2 L681.3 22.4 L677.6 18.2 L679.6 18.2 Z" fill="#fff" stroke="#7a7a7a" stroke-width="1"/>
<path d="M714.5 20.5 Q711.3 20.3 711.7 17.2 Q712.2 14.5 715.1 14.3 Q716.0 9.2 721.3 9.1 Q725.7 9.2 726.9 13.6 Q731.7 13.6 732.3 17.3 Q732.3 20.3 729.5 20.5 Z" fill="none" stroke="#7a7a7a" stroke-width="1.1"/>
<path d="M722.9 13.8 L727.4 18 L725 18 L725 22.5 L720.8 22.5 L720.8 18 L718.4 18 Z" fill="#777" stroke="#fff" stroke-width="0.6"/>
<g fill="#777"><path d="M752 8.3 L755.6 8.3 L754.3 9.6 L757.2 12.5 L756.3 13.4 L753.4 10.5 L752 11.9 Z"/><path d="M766.6 8.3 L763 8.3 L764.3 9.6 L761.4 12.5 L762.3 13.4 L765.2 10.5 L766.6 11.9 Z"/><path d="M752 21.8 L755.6 21.8 L754.3 20.5 L757.2 17.6 L756.3 16.7 L753.4 19.6 L752 18.2 Z"/><path d="M766.6 21.8 L763 21.8 L764.3 20.5 L761.4 17.6 L762.3 16.7 L765.2 19.6 L766.6 18.2 Z"/></g>
<rect x="7.5" y="41.8" width="9" height="9" rx="1" fill="none" stroke="#8a8a8a" stroke-width="1"/><rect x="8" y="45.8" width="8" height="1" fill="#8a8a8a"/>
<text x="22.5" y="51.6" font-family="Liberation Sans" font-size="13.2" fill="#4a4a4a" textLength="208.4" lengthAdjust="spacingAndGlyphs">EUR/USD, D, Real-time Currencies</text>
<path d="M234.2 46.3 L239.8 46.3 L237 49 Z" fill="#cfcfcf"/>
<rect x="248" y="42.2" width="11" height="11" fill="#d6d6d6"/><path d="M249.2 47.7 Q251.0 44.1 253.5 44.1 Q256.0 44.1 257.8 47.7 Q256.0 51.300000000000004 253.5 51.300000000000004 Q251.0 51.300000000000004 249.2 47.7 Z" fill="none" stroke="#fff" stroke-width="1.1"/><circle cx="253.5" cy="47.7" r="1.2" fill="#fff"/>
<rect x="262" y="42.2" width="11" height="11" fill="#d6d6d6"/><polygon points="271.82,46.84 271.90,47.70 270.64,48.32 270.46,48.92 271.16,50.14 270.61,50.81 269.28,50.36 268.72,50.66 268.36,52.02 267.50,52.10 266.88,50.84 266.28,50.66 265.06,51.36 264.39,50.81 264.84,49.48 264.54,48.92 263.18,48.56 263.10,47.70 264.36,47.08 264.54,46.48 263.84,45.26 264.39,44.59 265.72,45.04 266.28,44.74 266.64,43.38 267.50,43.30 268.12,44.56 268.72,44.74 269.94,44.04 270.61,44.59 270.16,45.92 270.46,46.48" fill="#fff"/><circle cx="267.5" cy="47.7" r="1.5" fill="#d6d6d6"/>
<text x="279.9" y="52" font-family="Liberation Sans" font-size="12" fill="#4a4a4a" textLength="43.8" lengthAdjust="spacingAndGlyphs">O1.1115</text>
<text x="332.8" y="52" font-family="Liberation Sans" font-size="12" fill="#4a4a4a" textLength="43.3" lengthAdjust="spacingAndGlyphs">H1.1128</text>
<text x="384.7" y="52" font-family="Liberation Sans" font-size="12" fill="#4a4a4a" textLength="41.2" lengthAdjust="spacingAndGlyphs">L1.1113</text>
<text x="435.2" y="52" font-family="Liberation Sans" font-size="12" fill="#4a4a4a" textLength="43.2" lengthAdjust="spacingAndGlyphs">C1.1126</text>
<text x="7.1" y="67" font-family="Liberation Sans" font-size="9.6" fill="#333" textLength="70.6" lengthAdjust="spacingAndGlyphs" stroke="#333" stroke-width="0.15">MA (20, close, 0)</text>
<path d="M82.2 62 L87.8 62 L85 64.8 Z" fill="#cfcfcf"/>
<rect x="96" y="58" width="11" height="11" fill="#d6d6d6"/><path d="M97.2 63.5 Q99.0 59.9 101.5 59.9 Q104.0 59.9 105.8 63.5 Q104.0 67.1 101.5 67.1 Q99.0 67.1 97.2 63.5 Z" fill="none" stroke="#fff" stroke-width="1.1"/><circle cx="101.5" cy="63.5" r="1.2" fill="#fff"/>
<rect x="109" y="58" width="11" height="11" fill="#d6d6d6"/><polygon points="118.82,62.64 118.90,63.50 117.64,64.12 117.46,64.72 118.16,65.94 117.61,66.61 116.28,66.16 115.72,66.46 115.36,67.82 114.50,67.90 113.88,66.64 113.28,66.46 112.06,67.16 111.39,66.61 111.84,65.28 111.54,64.72 110.18,64.36 110.10,63.50 111.36,62.88 111.54,62.28 110.84,61.06 111.39,60.39 112.72,60.84 113.28,60.54 113.64,59.18 114.50,59.10 115.12,60.36 115.72,60.54 116.94,59.84 117.61,60.39 117.16,61.72 117.46,62.28" fill="#fff"/><circle cx="114.5" cy="63.5" r="1.5" fill="#d6d6d6"/>
<rect x="123" y="58" width="11" height="11" fill="#d6d6d6"/><path d="M124.7 59.7 L132.3 67.3 M132.3 59.7 L124.7 67.3" stroke="#fff" stroke-width="1.2"/>
<text x="141.2" y="67.2" font-family="Liberation Sans" font-size="9.6" fill="#1a1ae6" textLength="28.4" lengthAdjust="spacingAndGlyphs" stroke="#1a1ae6" stroke-width="0.15">1.0967</text>
<text x="6.7" y="400.6" font-family="Liberation Sans" font-size="9.6" fill="#333" textLength="99.3" lengthAdjust="spacingAndGlyphs" stroke="#333" stroke-width="0.15">MACD (12, 26, close, 9)</text>
<path d="M110.5 395.7 L116 395.7 L113.2 398.4 Z" fill="#cfcfcf"/>
<rect x="124.5" y="391.5" width="11" height="11" fill="#d6d6d6"/><path d="M125.7 397.0 Q127.5 393.4 130.0 393.4 Q132.5 393.4 134.3 397.0 Q132.5 400.6 130.0 400.6 Q127.5 400.6 125.7 397.0 Z" fill="none" stroke="#fff" stroke-width="1.1"/><circle cx="130.0" cy="397.0" r="1.2" fill="#fff"/>
<rect x="137.5" y="391.5" width="11" height="11" fill="#d6d6d6"/><polygon points="147.32,396.14 147.40,397.00 146.14,397.62 145.96,398.22 146.66,399.44 146.11,400.11 144.78,399.66 144.22,399.96 143.86,401.32 143.00,401.40 142.38,400.14 141.78,399.96 140.56,400.66 139.89,400.11 140.34,398.78 140.04,398.22 138.68,397.86 138.60,397.00 139.86,396.38 140.04,395.78 139.34,394.56 139.89,393.89 141.22,394.34 141.78,394.04 142.14,392.68 143.00,392.60 143.62,393.86 144.22,394.04 145.44,393.34 146.11,393.89 145.66,395.22 145.96,395.78" fill="#fff"/><circle cx="143.0" cy="397.0" r="1.5" fill="#d6d6d6"/>
<rect x="150.7" y="391.5" width="11" height="11" fill="#d6d6d6"/><path d="M152.39999999999998 393.2 L160.0 400.8 M160.0 393.2 L152.39999999999998 400.8" stroke="#fff" stroke-width="1.2"/>
<text x="169.7" y="400.8" font-family="Liberation Sans" font-size="9.6" fill="#ff1a1a" textLength="28.1" lengthAdjust="spacingAndGlyphs">0.0020</text>
<text x="205.6" y="400.8" font-family="Liberation Sans" font-size="9.6" fill="#1a1aff" textLength="28.4" lengthAdjust="spacingAndGlyphs">0.0073</text>
<text x="242.5" y="400.8" font-family="Liberation Sans" font-size="9.6" fill="#ff1a1a" textLength="28.5" lengthAdjust="spacingAndGlyphs">0.0054</text>
<text x="14" y="371.2" font-family="Liberation Sans" font-size="16.2" fill="#111" font-weight="bold" textLength="70.5" lengthAdjust="spacingAndGlyphs" stroke="#111" stroke-width="0.7">Investing</text>
<text x="85.4" y="371.2" font-family="Liberation Sans" font-size="11.2" fill="#777" textLength="23.8" lengthAdjust="spacingAndGlyphs">.com</text>
<rect x="60.8" y="358.2" width="3.6" height="3" fill="#fff"/><circle cx="62.9" cy="359.3" r="1.5" fill="#f5a623"/>
<rect x="732" y="143" width="35" height="13" fill="#5886ea"/>
<rect x="732" y="187" width="36" height="13" fill="#1010f0"/>
<rect x="732" y="397" width="36" height="13" fill="#1010f0"/>
<rect x="732" y="424" width="36" height="13" fill="#ff1010"/>
<rect x="732" y="471" width="36" height="13" fill="#ff1010"/>
<g fill="#fff" shape-rendering="crispEdges"><rect x="733" y="149" width="3" height="1"/><rect x="733" y="193" width="3" height="1"/><rect x="733" y="403" width="3" height="1"/><rect x="733" y="430" width="3" height="1"/><rect x="733" y="477" width="3" height="1"/></g>
<text x="738" y="152.6" font-family="Liberation Sans" font-size="9.8" fill="#fff" font-weight="bold" textLength="25.8" lengthAdjust="spacingAndGlyphs">1.1126</text>
<text x="738" y="196.4" font-family="Liberation Sans" font-size="9.8" fill="#fff" font-weight="bold" textLength="25.8" lengthAdjust="spacingAndGlyphs">1.0967</text>
<text x="738" y="406.6" font-family="Liberation Sans" font-size="9.8" fill="#fff" font-weight="bold" textLength="25.8" lengthAdjust="spacingAndGlyphs">0.0073</text>
<text x="738" y="433.6" font-family="Liberation Sans" font-size="9.8" fill="#fff" font-weight="bold" textLength="25.8" lengthAdjust="spacingAndGlyphs">0.0054</text>
<text x="738" y="480.6" font-family="Liberation Sans" font-size="9.8" fill="#fff" font-weight="bold" textLength="25.8" lengthAdjust="spacingAndGlyphs">0.0020</text>
<g shape-rendering="crispEdges" fill="#555">
<rect x="47" y="563" width="1" height="2"/>
<rect x="110" y="563" width="1" height="2"/>
<rect x="191" y="563" width="1" height="2"/>
<rect x="254" y="563" width="1" height="2"/>
<rect x="372" y="563" width="1" height="2"/>
<rect x="435" y="563" width="1" height="2"/>
<rect x="498" y="563" width="1" height="2"/>
<rect x="579" y="563" width="1" height="2"/>
<rect x="642" y="563" width="1" height="2"/>
<rect x="705" y="563" width="1" height="2"/>
</g>
<text x="47.5" y="573.9" font-family="Liberation Sans" font-size="9.4" fill="#555" text-anchor="middle" textLength="9" lengthAdjust="spacingAndGlyphs">10</text>
<text x="110.5" y="573.9" font-family="Liberation Sans" font-size="9.4" fill="#555" text-anchor="middle" textLength="9" lengthAdjust="spacingAndGlyphs">21</text>
<text x="191.5" y="573.9" font-family="Liberation Sans" font-size="9.4" fill="#555" font-weight="bold" text-anchor="middle" textLength="15.2" lengthAdjust="spacingAndGlyphs">Jun</text>
<text x="254.5" y="573.9" font-family="Liberation Sans" font-size="9.4" fill="#555" text-anchor="middle" textLength="8.7" lengthAdjust="spacingAndGlyphs">12</text>
<text x="372.5" y="573.9" font-family="Liberation Sans" font-size="9.4" fill="#555" font-weight="bold" text-anchor="middle" textLength="12.7" lengthAdjust="spacingAndGlyphs">Jul</text>
<text x="435.5" y="573.9" font-family="Liberation Sans" font-size="9.4" fill="#555" text-anchor="middle" textLength="9" lengthAdjust="spacingAndGlyphs">10</text>
<text x="498.5" y="573.9" font-family="Liberation Sans" font-size="9.4" fill="#555" text-anchor="middle" textLength="9" lengthAdjust="spacingAndGlyphs">19</text>
<text x="579.5" y="573.9" font-family="Liberation Sans" font-size="9.4" fill="#555" font-weight="bold" text-anchor="middle" textLength="17.4" lengthAdjust="spacingAndGlyphs">Aug</text>
<text x="642.5" y="573.9" font-family="Liberation Sans" font-size="9.4" fill="#555" text-anchor="middle" textLength="8.7" lengthAdjust="spacingAndGlyphs">12</text>
<text x="705.5" y="573.9" font-family="Liberation Sans" font-size="9.4" fill="#555" text-anchor="middle" textLength="9" lengthAdjust="spacingAndGlyphs">21</text>
<text x="12.7" y="587.6" font-family="Liberation Sans" font-size="9.8" fill="#555" textLength="15.7" lengthAdjust="spacingAndGlyphs">10y</text>
<text x="49.5" y="587.6" font-family="Liberation Sans" font-size="9.8" fill="#555" textLength="9.7" lengthAdjust="spacingAndGlyphs">3y</text>
<text x="80.3" y="587.6" font-family="Liberation Sans" font-size="9.8" fill="#555" textLength="9.3" lengthAdjust="spacingAndGlyphs">1y</text>
<text x="110.4" y="587.6" font-family="Liberation Sans" font-size="9.8" fill="#555" textLength="12.6" lengthAdjust="spacingAndGlyphs">1m</text>
<text x="143.8" y="587.6" font-family="Liberation Sans" font-size="9.8" fill="#555" textLength="10.7" lengthAdjust="spacingAndGlyphs">7d</text>
<text x="174.9" y="587.6" font-family="Liberation Sans" font-size="9.8" fill="#555" textLength="10.1" lengthAdjust="spacingAndGlyphs">1d</text>
<text x="205.7" y="587.6" font-family="Liberation Sans" font-size="9.8" fill="#555" textLength="31.1" lengthAdjust="spacingAndGlyphs">Go to...</text>
<text x="558.8" y="587.6" font-family="Liberation Sans" font-size="9.8" fill="#555" textLength="71.3" lengthAdjust="spacingAndGlyphs">23:35:34 (UTC-4)</text>
<text x="649.7" y="587.6" font-family="Liberation Sans" font-size="9.8" fill="#555" textLength="7.2" lengthAdjust="spacingAndGlyphs">%</text>
<text x="677.5" y="587.6" font-family="Liberation Sans" font-size="9.8" fill="#555" textLength="12.2" lengthAdjust="spacingAndGlyphs">log</text>
<text x="709.6" y="587.6" font-family="Liberation Sans" font-size="9.8" fill="#555" textLength="18.6" lengthAdjust="spacingAndGlyphs">auto</text>
<g fill="#9a9ca0" shape-rendering="crispEdges">
<rect x="38" y="580" width="1" height="10"/>
<rect x="68" y="580" width="1" height="10"/>
<rect x="99" y="580" width="1" height="10"/>
<rect x="132" y="580" width="1" height="10"/>
<rect x="163" y="580" width="1" height="10"/>
<rect x="194" y="580" width="1" height="10"/>
<rect x="639" y="580" width="1" height="10"/>
<rect x="666" y="580" width="1" height="10"/>
<rect x="699" y="580" width="1" height="10"/>
<rect x="738" y="580" width="1" height="10"/>
</g>
<polygon points="759.40,583.49 759.50,584.50 758.13,585.26 757.90,585.99 758.62,587.39 757.98,588.18 756.47,587.74 755.79,588.10 755.31,589.60 754.30,589.70 753.54,588.33 752.81,588.10 751.41,588.82 750.62,588.18 751.06,586.67 750.70,585.99 749.20,585.51 749.10,584.50 750.47,583.74 750.70,583.01 749.98,581.61 750.62,580.82 752.13,581.26 752.81,580.90 753.29,579.40 754.30,579.30 755.06,580.67 755.79,580.90 757.19,580.18 757.98,580.82 757.54,582.33 757.90,583.01" fill="none" stroke="#666" stroke-width="1"/><circle cx="754.3" cy="584.5" r="1.8" fill="none" stroke="#666" stroke-width="1"/>
</svg>
</body></html>
